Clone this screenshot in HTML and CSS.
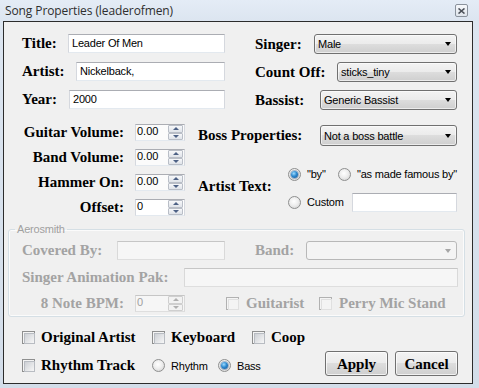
FILE: index.html
```html
<!DOCTYPE html>
<html>
<head>
<meta charset="utf-8">
<title>Song Properties</title>
<link rel="stylesheet" href="styles.css">
</head>
<body>
<div class="window">
  <div class="titlebar">
    <span class="title">Song Properties (leaderofmen)</span>
    <span class="close"><svg width="7" height="6" viewBox="0 0 7 6"><path d="M0.5 0.5 L6.5 5.5 M6.5 0.5 L0.5 5.5" stroke="#4a4f57" stroke-width="1.6" fill="none"/></svg></span>
  </div>
  <div class="client">
    <div class="pair top">
      <div class="col">
        <div class="row"><span class="lbl">Title:</span><div class="edit w157">Leader Of Men</div></div>
        <div class="row"><span class="lbl">Artist:</span><div class="edit w149">Nickelback,</div></div>
        <div class="row"><span class="lbl">Year:</span><div class="edit w156">2000</div></div>
      </div>
      <div class="col">
        <div class="row"><span class="lbl">Singer:</span><div class="combo w143"><span>Male</span><i class="arrow"></i></div></div>
        <div class="row"><span class="lbl">Count Off:</span><div class="combo w120"><span>sticks_tiny</span><i class="arrow"></i></div></div>
        <div class="row"><span class="lbl">Bassist:</span><div class="combo w137"><span>Generic Bassist</span><i class="arrow"></i></div></div>
      </div>
    </div>

    <div class="mid">
      <div class="nums">
        <span class="lbl rlbl">Guitar Volume:</span>
        <div class="spin ro"><span class="val">0.00</span><div class="spinbtns"><i class="up"></i><i class="dn"></i></div></div>
        <span class="lbl rlbl">Band Volume:</span>
        <div class="spin ro"><span class="val">0.00</span><div class="spinbtns"><i class="up"></i><i class="dn"></i></div></div>
        <span class="lbl rlbl">Hammer On:</span>
        <div class="spin ro"><span class="val">0.00</span><div class="spinbtns"><i class="up"></i><i class="dn"></i></div></div>
        <span class="lbl rlbl">Offset:</span>
        <div class="spin"><span class="val">0</span><div class="spinbtns"><i class="up"></i><i class="dn"></i></div></div>
      </div>
      <div class="side">
        <div class="row boss"><span class="lbl">Boss Properties:</span><div class="combo w137 tall"><span>Not a boss battle</span><i class="arrow"></i></div></div>
        <div class="artisttext">
          <span class="lbl">Artist Text:</span>
          <div class="radios">
            <div class="rrow">
              <span class="opt by"><i class="radio on"></i>&quot;by&quot;</span>
              <span class="opt"><i class="radio"></i>&quot;as made famous by&quot;</span>
            </div>
            <div class="rrow">
              <span class="opt"><i class="radio"></i>Custom</span>
              <div class="edit w105"></div>
            </div>
          </div>
        </div>
      </div>
    </div>

    <fieldset class="group">
      <legend>Aerosmith</legend>
      <div class="pair grow">
        <div class="row"><span class="lbl dis">Covered By:</span><div class="edit dis w108"></div></div>
        <div class="row"><span class="lbl dis">Band:</span><div class="combo dis w151"><span></span><i class="arrow"></i></div></div>
      </div>
      <div class="row grow"><span class="lbl dis">Singer Animation Pak:</span><div class="edit dis w274"></div></div>
      <div class="bpm">
        <span class="lbl dis rlbl">8 Note BPM:</span>
        <div class="spin dis"><span class="val">0</span><div class="spinbtns"><i class="up"></i><i class="dn"></i></div></div>
        <span class="citem gtr"><i class="chk dis"></i><span class="lbl dis">Guitarist</span></span>
        <span class="citem"><i class="chk dis"></i><span class="lbl dis">Perry Mic Stand</span></span>
      </div>
    </fieldset>

    <div class="bottom">
      <div class="brow1">
        <span class="citem c1"><i class="chk"></i><span class="lbl">Original Artist</span></span>
        <span class="citem c2"><i class="chk"></i><span class="lbl">Keyboard</span></span>
        <span class="citem"><i class="chk"></i><span class="lbl">Coop</span></span>
      </div>
      <div class="brow2">
        <span class="citem c1 low"><i class="chk"></i><span class="lbl">Rhythm Track</span></span>
        <span class="opt low rhy"><i class="radio"></i>Rhythm</span>
        <span class="opt low"><i class="radio on"></i>Bass</span>
        <div class="buttons">
          <button class="btn">Apply</button>
          <button class="btn">Cancel</button>
        </div>
      </div>
    </div>
  </div>
</div>
</body>
</html>
```

FILE: styles.css
```css
* { box-sizing: border-box; margin: 0; padding: 0; }
html, body { width: 479px; height: 388px; overflow: hidden; background: #ffffff; }
body { font-family: "Liberation Sans", Arial, sans-serif; font-size: 11px; color: #000; }

.window {
  width: 479px; height: 388px;
  display: flex; flex-direction: column;
  padding: 0 6px 4px 3px;
  background: linear-gradient(180deg, #e4ecf6 0px, #dce5f0 21px, #d3dde9 100%);
}
.titlebar {
  height: 21px; flex: none;
  display: flex; align-items: center; justify-content: space-between;
  padding: 0 5px 0 2px;
}
.title { font: 12px "Open Sans", "Noto Sans", sans-serif; color: #2e2e2e; letter-spacing: -0.1px; }
.close {
  width: 13px; height: 13px;
  border: 1px solid #8a929c; border-radius: 2px;
  background: linear-gradient(#f6f8fb, #dfe5ec);
  display: flex; align-items: center; justify-content: center;
}
.client {
  flex: 1;
  background: #f0f0f0;
  border: 1px solid #2c2c2c;
  padding: 12px 14px 0 18px;
  display: flex; flex-direction: column;
}

.lbl { font: bold 15px "Liberation Serif", "Times New Roman", serif; line-height: 17px; color: #000; white-space: nowrap; letter-spacing: 0; }
.lbl.dis { color: #a3a3a3; }
.rlbl { text-align: right; }

.pair { display: grid; grid-template-columns: 203px 202px; column-gap: 30px; }
.col { display: flex; flex-direction: column; gap: 8px; }
.row { display: flex; align-items: flex-start; justify-content: space-between; height: 20px; }
.row .lbl { align-self: center; }

.edit {
  height: 19px; background: #fff;
  border: 1px solid; border-color: #abadb3 #d5d8de #e3e9ef #d5d8de;
  font-size: 11px; line-height: 17px; padding-left: 3px; color: #000; white-space: nowrap;
  letter-spacing: -0.2px;
}
.edit.dis { background: #f6f6f6; border-color: #c6c6c6 #d9d9d9 #dedede #d9d9d9; }

.combo {
  height: 20px;
  border: 1px solid #707070; border-radius: 3px;
  background: linear-gradient(#f3f3f3 0%, #ebebeb 50%, #dddddd 50%, #cfcfcf 100%);
  box-shadow: inset 0 0 0 1px rgba(255,255,255,0.6);
  display: flex; align-items: center; justify-content: space-between;
  padding: 0 5px 0 3px; font-size: 11px; white-space: nowrap; letter-spacing: -0.2px;
}
.combo.tall { height: 21px; }
.combo.dis { height: 19px; background: #f4f4f4; border-color: #b8b8b8; box-shadow: none; }
.arrow { width: 0; height: 0; border-left: 3.5px solid transparent; border-right: 3.5px solid transparent; border-top: 4px solid #000; }
.combo.dis .arrow { border-top-color: #a6a6a6; }

.w157 { width: 157px; } .w149 { width: 149px; } .w156 { width: 156px; }
.w143 { width: 143px; } .w120 { width: 120px; } .w137 { width: 137px; }
.w105 { width: 105px; } .w108 { width: 108px; } .w151 { width: 151px; } .w274 { width: 274px; }

.top .col:first-child .row { height: 19px; }
.top .col:first-child { gap: 9px; }

/* middle */
.mid { display: flex; margin-top: 14px; }
.nums { display: grid; grid-template-columns: 102px 50px; column-gap: 11px; row-gap: 8px; grid-auto-rows: 17px; align-items: center; flex: none; }
.spin {
  width: 50px; height: 17px; display: flex;
  background: #fff;
  border: 1px solid; border-color: #abadb3 #d5d8de #e3e9ef #d5d8de;
  font-size: 11px; line-height: 12px;
}
.spin.ro { background: #fbfbfb; }
.spin .val { flex: 1; padding-left: 1px; }
.spin.dis { background: #f6f6f6; border-color: #c6c6c6 #d9d9d9 #dedede #d9d9d9; color: #a0a0a0; }
.spinbtns { width: 16px; display: flex; flex-direction: column; padding: 0 1px 0 0; }
.spinbtns i {
  flex: 1; display: flex; align-items: center; justify-content: center;
  border: 1px solid #b9bec7; border-radius: 1px;
  background: linear-gradient(#f7f8fa, #dfe3e9);
}
.spinbtns i::after { content: ""; width: 0; height: 0; border-left: 3px solid transparent; border-right: 3px solid transparent; }
.spinbtns .up::after { border-bottom: 3px solid #4d6185; }
.spinbtns .dn::after { border-top: 3px solid #4d6185; }
.spin.dis .spinbtns i { border-color: #cfcfcf; background: #f2f2f2; }
.spin.dis .spinbtns .up::after { border-bottom-color: #b0b0b0; }
.spin.dis .spinbtns .dn::after { border-top-color: #b0b0b0; }

.side { width: 259px; flex: none; margin-left: 13px; display: flex; flex-direction: column; }
.boss { height: 21px; margin-top: 1px; }
.artisttext { display: flex; margin-top: 18px; }
.artisttext > .lbl { width: 90px; flex: none; align-self: center; padding-bottom: 4px; }
.radios { flex: 1; min-width: 0; display: flex; flex-direction: column; gap: 8px; }
.rrow { height: 20px; display: flex; align-items: center; justify-content: space-between; }
.rrow:first-child { justify-content: flex-start; }
.opt { display: inline-flex; align-items: center; gap: 6px; font-size: 11px; white-space: nowrap; letter-spacing: -0.2px; }
.opt.by { width: 50px; flex: none; }

.radio {
  width: 13px; height: 13px; border-radius: 50%; flex: none;
  border: 1px solid #8e8f8f;
  background: radial-gradient(circle at 45% 40%, #ffffff 0%, #eeeeee 45%, #cdcdcd 100%);
  display: inline-flex; align-items: center; justify-content: center;
}
.radio.on::after {
  content: ""; width: 7px; height: 7px; border-radius: 50%;
  background: radial-gradient(circle at 40% 35%, #9fdcff 0%, #2f8ad0 45%, #124f8f 100%);
  box-shadow: 0 0 0 1px rgba(30,70,120,0.35);
}

/* group */
.group {
  margin: 7px -7px 0 -14px;
  border: 1px solid #d5dfe5; border-radius: 3px;
  box-shadow: inset 0 0 0 1px #fbfbfb;
  padding: 5px 6px 4px 13px;
  display: flex; flex-direction: column; gap: 8px;
}
.group legend { font-size: 11px; line-height: 13px; color: #a0a0a0; padding: 0 2px; margin-left: -7px; letter-spacing: -0.2px; }
.grow .row, .row.grow { height: 19px; }
.pair.grow { height: 19px; }
.bpm { display: flex; align-items: center; height: 17px; }
.bpm .rlbl { width: 102px; }
.bpm .spin { margin-left: 11px; }
.citem { display: inline-flex; align-items: center; gap: 6px; }
.bpm .citem { gap: 7px; }
.citem.gtr { margin-left: 41px; width: 93px; }

.chk {
  width: 13px; height: 13px; flex: none;
  border: 1px solid #8e8f8f; background: #f4f4f4; padding: 1px; display: inline-block;
}
.chk::after {
  content: ""; display: block; width: 100%; height: 100%;
  border: 1px solid #b8bcc2;
  background: linear-gradient(135deg, #cdd0d5, #f7f7f7);
}
.chk.dis { border-color: #b1b1b1; }
.chk.dis::after { border-color: #e0e0e0; background: #f4f4f4; }

/* bottom */
.bottom { margin-top: 14px; display: flex; flex-direction: column; }
.brow1 { height: 13px; display: flex; align-items: center; }
.citem.c1 { width: 130px; }
.citem.c2 { width: 100px; }
.brow2 { height: 25px; margin-top: 7px; display: flex; align-items: center; }
.low { margin-top: 4px; }
.opt.rhy { width: 66px; }
.buttons { margin-left: auto; display: flex; gap: 7px; }
.btn {
  width: 63px; height: 25px;
  border: 1px solid #707070; border-radius: 3px;
  background: linear-gradient(#f3f3f3 0%, #ebebeb 50%, #dddddd 50%, #cfcfcf 100%);
  box-shadow: inset 0 0 0 1px rgba(255,255,255,0.7);
  font: bold 15px "Liberation Serif", "Times New Roman", serif; color: #000;
  padding-top: 1px;
}
```
